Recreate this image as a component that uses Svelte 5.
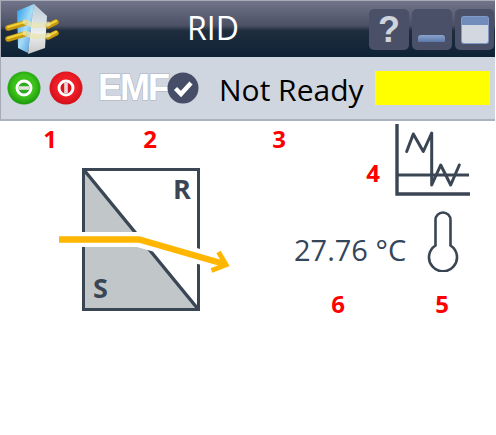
<script>
  const callouts = [
    { n: 1, x: 50, y: 138 },
    { n: 2, x: 150, y: 138 },
    { n: 3, x: 279, y: 138 },
    { n: 4, x: 373, y: 172 },
    { n: 5, x: 442, y: 303 },
    { n: 6, x: 338, y: 303 }
  ];
</script>

<div class="window">
  <header class="titlebar">
    <svg class="logo" viewBox="0 0 60 56" width="60" height="56" aria-hidden="true">
      <defs>
        <linearGradient id="blueFace" x1="0" y1="0" x2="1" y2="1">
          <stop offset="0" stop-color="#1f9bea" />
          <stop offset="0.5" stop-color="#a8dcf8" />
          <stop offset="1" stop-color="#3c8fd8" />
        </linearGradient>
        <linearGradient id="greyFace" x1="0" y1="0" x2="0" y2="1">
          <stop offset="0" stop-color="#b9cad6" />
          <stop offset="0.6" stop-color="#eef0ee" />
          <stop offset="1" stop-color="#c6c8ca" />
        </linearGradient>
      </defs>
      <polygon points="15,10 32,3 26,52 16,47" fill="url(#blueFace)" />
      <polygon points="32,3 45,15 43,47 26,53" fill="url(#greyFace)" />
      <polygon points="32,3 26,52 30,30" fill="#e8f4fb" opacity="0.7" />
      <g fill="none" stroke-linecap="round">
        <path d="M6 27 L23 22" stroke="#c59a10" stroke-width="5.5" />
        <path d="M6 26 L23 21" stroke="#f2d23a" stroke-width="2.2" />
        <path d="M46 25 L54 21" stroke="#c59a10" stroke-width="5.5" />
        <path d="M46 24 L54 20" stroke="#f2d23a" stroke-width="2.2" />
        <path d="M6 38 L23 33" stroke="#c59a10" stroke-width="5.5" />
        <path d="M6 37 L23 32" stroke="#f2d23a" stroke-width="2.2" />
        <path d="M46 36 L54 32" stroke="#c59a10" stroke-width="5.5" />
        <path d="M46 35 L54 31" stroke="#f2d23a" stroke-width="2.2" />
        <path d="M23 21 Q34 27 46 23" stroke="#e9e5b0" stroke-width="5" opacity="0.75" />
        <path d="M23 32 Q34 38 46 34" stroke="#e9e5b0" stroke-width="5" opacity="0.75" />
      </g>
    </svg>
    <h1 class="title">RID</h1>
    <div class="winbtns">
      <button class="winbtn help" aria-label="Help">?</button>
      <button class="winbtn" aria-label="Minimize"><span class="min"></span></button>
      <button class="winbtn last" aria-label="Maximize"><span class="max"></span></button>
    </div>
  </header>

  <div class="toolbar">
    <svg class="round" viewBox="0 0 34 34" width="34" height="34" aria-hidden="true">
      <defs>
        <radialGradient id="g" cx="0.5" cy="0.45" r="0.6">
          <stop offset="0.55" stop-color="#3cc01a" />
          <stop offset="1" stop-color="#128f0c" />
        </radialGradient>
      </defs>
      <circle cx="17" cy="17" r="16.5" fill="url(#g)" />
      <circle cx="17" cy="17" r="7" fill="#2fa823" stroke="#fff" stroke-width="3" />
      <rect x="12" y="15.2" width="10" height="3.6" fill="#dce8d4" />
    </svg>
    <svg class="round" viewBox="0 0 34 34" width="34" height="34" aria-hidden="true">
      <defs>
        <radialGradient id="r" cx="0.5" cy="0.45" r="0.6">
          <stop offset="0.55" stop-color="#ee1c24" />
          <stop offset="1" stop-color="#c80c18" />
        </radialGradient>
      </defs>
      <circle cx="17" cy="17" r="16.5" fill="url(#r)" />
      <circle cx="17" cy="17" r="7" fill="#d8141e" stroke="#fff" stroke-width="3" />
      <rect x="15.2" y="12" width="3.6" height="10" fill="#e6d8d8" />
    </svg>
    <div class="emf">
      <span class="emftext">EMF</span>
      <svg class="check" viewBox="0 0 32 32" width="32" height="32" aria-hidden="true">
        <circle cx="16" cy="16" r="15.5" fill="#464d66" />
        <path d="M8.5 16.5 L14 22 L24 11" fill="none" stroke="#fff" stroke-width="4.4" />
      </svg>
    </div>
    <span class="status">Not Ready</span>
    <div class="lamp"></div>
  </div>

  <main class="content">
    <svg class="prism" viewBox="55 165 180 150" width="180" height="150" aria-hidden="true">
      <polygon points="84,170 198,309 84,309" fill="#c1c6c9" />
      <rect x="83.5" y="169.5" width="115" height="140" fill="none" stroke="#3a4654" stroke-width="3" />
      <line x1="84" y1="170" x2="198" y2="309" stroke="#3a4654" stroke-width="3.4" />
      <path d="M59 239.5 H138 L226 264" fill="none" stroke="#fff" stroke-width="15" />
      <path d="M59 239.5 H139 L226 264.5" fill="none" stroke="#ffb600" stroke-width="6.5" />
      <path d="M218.5 252 L226 264.8 L211.5 270.5" fill="none" stroke="#ffb600" stroke-width="5" />
      <text x="173" y="199" class="letter">R</text>
      <text x="93" y="298" class="letter">S</text>
    </svg>

    <div class="readout">
      <svg class="chart" viewBox="394 123 78 75" width="78" height="75" aria-hidden="true">
        <path d="M397 124 V194 H470" fill="none" stroke="#3a4654" stroke-width="3.4" />
        <line x1="398" y1="175" x2="469" y2="175" stroke="#3a4654" stroke-width="3" />
        <path d="M406.7 151.5 L413.3 134 L423.3 151.5 L431.7 133 V185 L440.7 165 L450.7 185 L459.3 165" fill="none" stroke="#3a4654" stroke-width="3" stroke-linecap="round" stroke-linejoin="round" />
      </svg>
      <div class="temp">
        <span class="value">27.76 °C</span>
        <svg class="thermo" viewBox="426 211 34 62" width="34" height="62" aria-hidden="true">
          <path d="M435.5 246.5 A14 14 0 1 0 450.5 246.5 V221 A7.5 7.5 0 0 0 435.5 221 Z" fill="none" stroke="#3a4654" stroke-width="2.6" />
        </svg>
      </div>
    </div>

    {#each callouts as c}
      <span class="callout" style="left:{c.x}px;top:{c.y - 121}px">{c.n}</span>
    {/each}
  </main>
</div>

<style>
  :global(body) {
    margin: 0;
    background: #fff;
  }
  .window {
    width: 496px;
    height: 435px;
    display: flex;
    flex-direction: column;
    font-family: "Open Sans", "Noto Sans", sans-serif;
    background: #fff;
    overflow: hidden;
  }
  .titlebar {
    height: 57px;
    box-sizing: border-box;
    margin-right: 1px;
    border-top: 1px solid #a6abb6;
    border-left: 1px solid #a6abb6;
    background: linear-gradient(#71748a 0, #4b5064 44%, #1f2d3e 53%, #0e2236 100%);
    display: flex;
    align-items: flex-start;
    position: relative;
  }
  .logo {
    flex: none;
    margin-left: 1px;
  }
  .title {
    margin: 5px 0 0;
    position: absolute;
    left: 0;
    right: 0;
    text-align: center;
    font-size: 32px;
    line-height: 44px;
    font-weight: 400;
    color: #fff;
    padding-right: 70px;
    pointer-events: none;
  }
  .winbtns {
    margin-left: auto;
    margin-top: 8px;
    margin-right: 1px;
    display: flex;
    gap: 3px;
  }
  .winbtn {
    width: 40px;
    height: 41px;
    padding: 0;
    border: 0;
    border-radius: 5px;
    background: #4a5068;
    display: flex;
    align-items: center;
    justify-content: center;
    position: relative;
  }
  .winbtn.last {
    width: 39px;
  }
  .help {
    font-family: "Liberation Sans", sans-serif;
    font-weight: 700;
    font-size: 36px;
    color: #cfd3dc;
  }
  .min {
    position: absolute;
    left: 6px;
    right: 7px;
    bottom: 8px;
    height: 7px;
    border-radius: 3px 3px 0 0;
    background: linear-gradient(#8aa4cc, #5a78a8);
  }
  .max {
    width: 26px;
    height: 18px;
    border-top: 8px solid #6f8cba;
    background: #d2d7e0;
    box-shadow: 0 0 0 1px #7f9bc6;
    border-radius: 2px;
  }
  .toolbar {
    height: 64px;
    box-sizing: border-box;
    margin-right: 1px;
    border-left: 1px solid #a6abb6;
    border-bottom: 2px solid #adb2c0;
    background: #d0d6e0;
    display: flex;
    align-items: center;
    padding-left: 6px;
  }
  .round + .round {
    margin-left: 8px;
  }
  .emf {
    margin-left: 15px;
    display: flex;
    align-items: center;
  }
  .emftext {
    font-family: "Liberation Sans", sans-serif;
    font-weight: 700;
    font-size: 36px;
    line-height: 36px;
    letter-spacing: -2px;
    color: #fff;
    -webkit-text-stroke: 1.5px #b6bbc9;
    paint-order: stroke fill;
    width: 69px;
  }
  .status {
    margin: 3px 0 0 20px;
    font-size: 30px;
    color: #000;
    white-space: nowrap;
  }
  .lamp {
    margin-left: auto;
    margin-right: 5px;
    width: 115px;
    height: 34px;
    background: #ff0;
  }
  .content {
    flex: 1;
    position: relative;
    display: flex;
    align-items: flex-start;
  }
  .prism {
    flex: none;
    margin: 44px 0 0 55px;
  }
  .letter {
    font-family: "Open Sans", sans-serif;
    font-weight: 700;
    font-size: 27px;
    fill: #3a4654;
  }
  .readout {
    margin: 2px 0 0 59px;
    width: 178px;
    display: flex;
    flex-direction: column;
  }
  .chart {
    align-self: flex-end;
  }
  .temp {
    display: flex;
    align-items: center;
    margin-top: 12px;
  }
  .value {
    font-size: 29px;
    line-height: 40px;
    color: #34465a;
    white-space: nowrap;
    width: 132px;
    margin-top: 18px;
  }
  .callout {
    position: absolute;
    transform: translate(-50%, -50%);
    font-family: "Open Sans", sans-serif;
    font-weight: 700;
    font-size: 24px;
    color: #f00;
  }
</style>
